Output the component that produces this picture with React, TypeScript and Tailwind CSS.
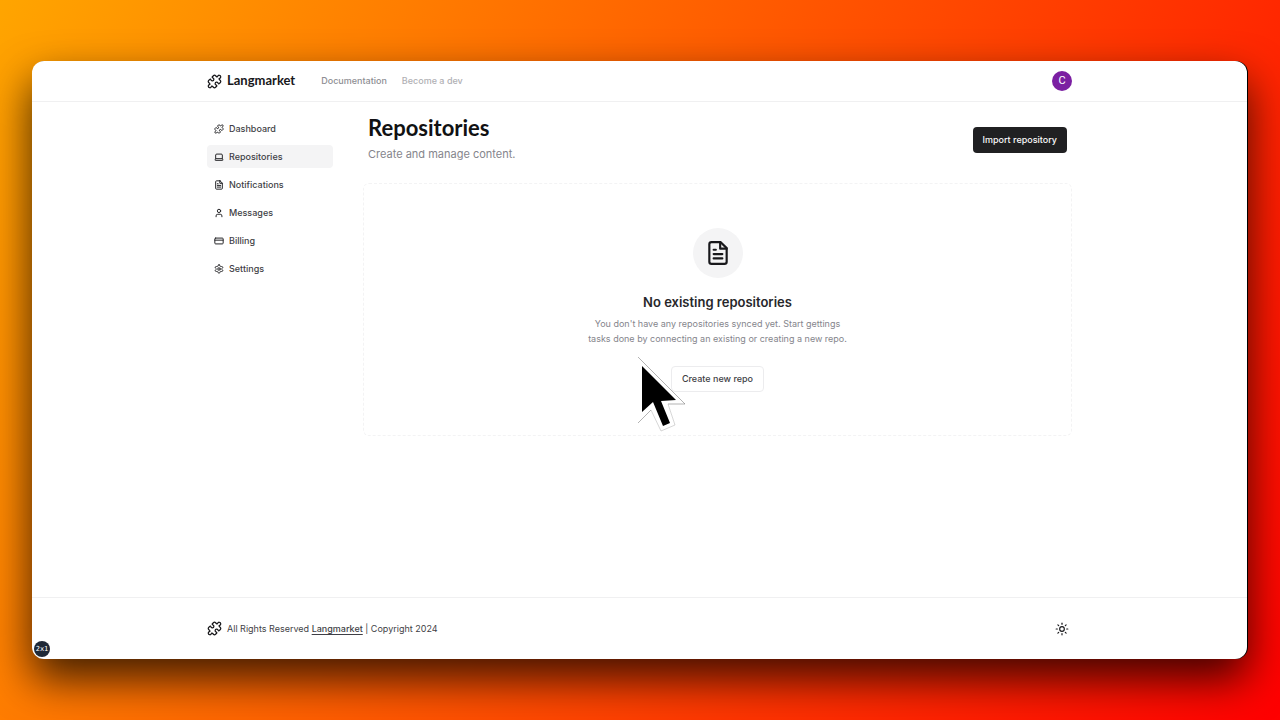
import type { ComponentType, ReactNode } from "react";
import { CreditCard, Laptop, Puzzle, Sun, User } from "lucide-react";

type IconProps = { className?: string };

function Glyph({ className, children }: IconProps & { children: ReactNode }) {
  return (
    <svg
      viewBox="0 0 24 24"
      fill="none"
      stroke="currentColor"
      strokeWidth="2"
      strokeLinecap="round"
      strokeLinejoin="round"
      aria-hidden="true"
      className={className}
    >
      {children}
    </svg>
  );
}

function PostIcon({ className }: IconProps) {
  return (
    <Glyph className={className}>
      <path d="M14.5 2H6a2 2 0 0 0-2 2v16a2 2 0 0 0 2 2h12a2 2 0 0 0 2-2V7.5L14.5 2z" />
      <path d="M14 2v6h6" />
      <path d="M16 13H8M16 17H8M10 9H8" />
    </Glyph>
  );
}

function GearIcon({ className }: IconProps) {
  return (
    <Glyph className={className}>
      <path d="M12.22 2h-.44a2 2 0 0 0-2 2v.18a2 2 0 0 1-1 1.73l-.43.25a2 2 0 0 1-2 0l-.15-.08a2 2 0 0 0-2.73.73l-.22.38a2 2 0 0 0 .73 2.73l.15.1a2 2 0 0 1 1 1.72v.51a2 2 0 0 1-1 1.74l-.15.09a2 2 0 0 0-.73 2.73l.22.38a2 2 0 0 0 2.73.73l.15-.08a2 2 0 0 1 2 0l.43.25a2 2 0 0 1 1 1.73V20a2 2 0 0 0 2 2h.44a2 2 0 0 0 2-2v-.18a2 2 0 0 1 1-1.73l.43-.25a2 2 0 0 1 2 0l.15.08a2 2 0 0 0 2.73-.73l.22-.39a2 2 0 0 0-.73-2.73l-.15-.08a2 2 0 0 1-1-1.74v-.5a2 2 0 0 1 1-1.74l.15-.09a2 2 0 0 0 .73-2.73l-.22-.38a2 2 0 0 0-2.73-.73l-.15.08a2 2 0 0 1-2 0l-.43-.25a2 2 0 0 1-1-1.73V4a2 2 0 0 0-2-2z" />
      <circle cx="12" cy="12" r="3" />
    </Glyph>
  );
}

const navigation: { label: string; icon: ComponentType<IconProps>; active?: boolean }[] = [
  { label: "Dashboard", icon: Puzzle },
  { label: "Repositories", icon: Laptop, active: true },
  { label: "Notifications", icon: PostIcon },
  { label: "Messages", icon: User },
  { label: "Billing", icon: CreditCard },
  { label: "Settings", icon: GearIcon },
];

function Header() {
  return (
    <header className="border-b border-[#f0f0f1]">
      <div className="mx-auto flex h-10 max-w-[865px] items-center">
        <a href="#" className="flex items-center gap-[5px] font-[Lato,sans-serif] text-[13px] font-bold text-[#18181b]">
          <Puzzle className="size-[15px]" />
          Langmarket
        </a>
        <nav className="ml-[26px] flex gap-[15px] text-[9px] font-medium">
          <a href="#" className="text-[#8e8e93]">Documentation</a>
          <a href="#" className="text-[#b0b0b4]">Become a dev</a>
        </nav>
        <button
          type="button"
          aria-label="Account"
          className="ml-auto flex size-5 items-center justify-center rounded-full bg-[#7b1fa2] font-[Roboto] text-[11px] text-white"
        >
          C
        </button>
      </div>
    </header>
  );
}

function Sidebar() {
  return (
    <nav className="flex w-[126px] shrink-0 flex-col gap-[5px]">
      {navigation.map(({ label, icon: Icon, active }) => (
        <a
          key={label}
          href="#"
          aria-current={active ? "page" : undefined}
          className={`flex h-[23px] items-center gap-[5px] rounded px-[7px] text-[9px] font-medium text-[#3f3f46] ${active ? "bg-[#f4f4f5]" : ""}`}
        >
          <Icon className="size-[10px] stroke-[#27272a] stroke-[2.4]" />
          {label}
        </a>
      ))}
    </nav>
  );
}

function EmptyState() {
  return (
    <section className="mt-5 flex flex-col items-center rounded-md border border-dashed border-[#f3f3f4] px-6 pt-11 pb-[43px] text-center">
      <div className="flex size-[50px] items-center justify-center rounded-full bg-[#f4f4f5]">
        <PostIcon className="size-[26px] text-[#18181b]" />
      </div>
      <h2 className="mt-4 text-[13px] leading-4 font-semibold text-[#27272a]">No existing repositories</h2>
      <p className="mt-1.5 max-w-[264px] text-[9px] leading-[15px] text-[#85858c]">
        You don't have any repositories synced yet. Start gettings tasks done by connecting an existing or creating a new repo.
      </p>
      <button
        type="button"
        className="mt-5 h-[26px] rounded border border-[#ececee] bg-white px-[10px] text-[9px] font-medium text-[#3f3f46]"
      >
        Create new repo
      </button>
    </section>
  );
}

function Footer() {
  return (
    <footer className="border-t border-[#f0f0f1]">
      <div className="mx-auto flex h-[61px] max-w-[865px] items-center">
        <Puzzle className="size-[15px] text-[#18181b]" />
        <p className="ml-[5px] text-[9px] text-[#3f3f46]">
          All Rights Reserved{" "}
          <a href="#" className="font-medium underline underline-offset-2">Langmarket</a> | Copyright 2024
        </p>
        <button type="button" aria-label="Toggle theme" className="ml-auto mr-[3px] text-[#18181b]">
          <Sun className="size-[14px]" />
        </button>
      </div>
    </footer>
  );
}

function Pointer() {
  return (
    <svg
      aria-hidden="true"
      viewBox="0 0 50 78"
      className="pointer-events-none absolute top-[294px] left-[605px] h-[78px] w-[50px]"
    >
      <path d="M1 2 48 49H31L38 70 24 76 14 55 1 68Z" fill="#fff" />
      <path d="M1 2 48 49H31M14 55 1 68" fill="none" stroke="#666" strokeWidth="0.5" />
      <path d="M31 49 38 70 24 76 14 55" fill="none" stroke="#999" strokeWidth="0.4" />
      <path d="M5 11V57L16 47 26 71 33 68 24 46 39 45Z" fill="#000" />
    </svg>
  );
}

export default function App() {
  return (
    <div className="flex min-h-screen flex-col bg-[linear-gradient(120deg,#ffa500,#ff0000)] pt-[61px] pr-[33px] pb-[61px] pl-8 font-[Inter,sans-serif]">
      <div className="relative flex flex-1 flex-col overflow-hidden rounded-xl bg-white shadow-[1px_0_0_#000,0_20px_44px_rgba(0,0,0,0.75)]">
        <Header />
        <div className="mx-auto flex w-full max-w-[865px] flex-1 gap-[30px] pt-[15px]">
          <Sidebar />
          <main className="min-w-0 flex-1">
            <div className="flex items-center justify-between px-[5px]">
              <div className="flex flex-col gap-1.5">
                <h1 className="font-[Lato,sans-serif] text-[22px] leading-[22px] font-bold text-[#111113]">Repositories</h1>
                <p className="text-[11px] leading-[18px] text-[#85858c]">Create and manage content.</p>
              </div>
              <button
                type="button"
                className="h-[26px] rounded bg-[#202022] px-[10px] text-[9px] font-medium text-[#fafafa]"
              >
                Import repository
              </button>
            </div>
            <EmptyState />
          </main>
        </div>
        <Footer />
        <span className="absolute bottom-[2px] left-[2px] flex size-4 items-center justify-center rounded-full bg-[#1f2937] font-['DejaVu_Sans_Mono',monospace] text-[7px] text-white">
          2x1
        </span>
        <Pointer />
      </div>
    </div>
  );
}
